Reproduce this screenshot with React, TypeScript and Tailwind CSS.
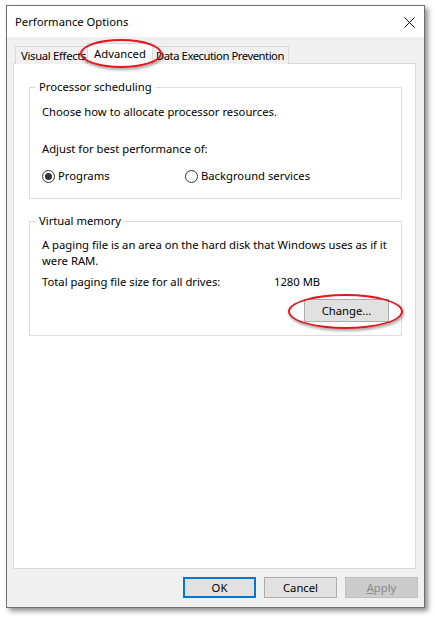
import React from "react";

const font = { fontFamily: '"Noto Sans", "Segoe UI", Arial, sans-serif' };

function Radio({ checked, label }: { checked?: boolean; label: string }) {
  return (
    <div className="flex items-center gap-[3px]">
      <span className="flex h-[13px] w-[13px] items-center justify-center rounded-full border border-[#333333] bg-white">
        {checked && <span className="h-[7px] w-[7px] rounded-full bg-[#333333]" />}
      </span>
      <span>{label}</span>
    </div>
  );
}

function Group({ title, height, children }: { title: string; height: string; children: React.ReactNode }) {
  return (
    <div className={`relative ml-[15px] w-[373px] border border-[#dcdcdc] ${height}`}>
      <span className="absolute left-[6px] top-[-9px] bg-white px-[3px] leading-[16px]">{title}</span>
      {children}
    </div>
  );
}

export default function App() {
  return (
    <div className="relative h-[618px] w-[435px] overflow-hidden bg-white text-[11.25px] text-black" style={font}>
      <div className="pl-[6px] pt-[5px]">
        <div className="flex h-[603px] w-[419px] flex-col border border-[#6f6f6f] bg-[#f0f0f0] shadow-[3px_3px_5px_rgba(0,0,0,0.45)]">
          {/* Title bar */}
          <div className="flex h-[31px] items-center justify-between bg-white pl-[8px] pr-[9px]">
            <span className="mt-[2px]">Performance Options</span>
            <svg width="11" height="11" viewBox="0 0 11 11" className="mt-[1px]">
              <path d="M0.5 0.5 L10.5 10.5 M10.5 0.5 L0.5 10.5" stroke="#111" strokeWidth="1" fill="none" />
            </svg>
          </div>
          {/* Body */}
          <div className="flex flex-1 flex-col pl-[6px] pt-[7px]">
            {/* Tabs */}
            <div className="relative z-10 flex h-[20px] items-end pl-[2px]">
              <div className="flex h-[18px] w-[74px] items-center whitespace-nowrap border border-b-0 border-[#d9d9d9] bg-[#f0f0f0] pl-[5px] leading-none tracking-[-0.3px]">
                Visual Effects
              </div>
              <div className="relative z-10 -mx-[2px] flex h-[21px] w-[66px] shrink-0 items-start justify-center border border-b-0 border-[#d9d9d9] bg-white pt-[3px] leading-[14px]">
                Advanced
              </div>
              <div className="flex h-[18px] items-center whitespace-nowrap border border-b-0 border-[#d9d9d9] bg-[#f0f0f0] pl-[4px] pr-[4px] leading-none tracking-[-0.45px]">
                Data Execution Prevention
              </div>
            </div>
            {/* Panel */}
            <div className="-mt-[1px] flex h-[506px] w-[403px] flex-col border border-[#d9d9d9] bg-white pt-[23px] leading-[16px]">
              <Group title="Processor scheduling" height="h-[112px]">
                <div className="flex flex-col pl-[12px] pt-[16px]">
                  <div>Choose how to allocate processor resources.</div>
                  <div className="mt-[21px]">Adjust for best performance of:</div>
                  <div className="mt-[11px] flex items-center">
                    <div className="w-[143px]">
                      <Radio checked label="Programs" />
                    </div>
                    <Radio label="Background services" />
                  </div>
                </div>
              </Group>
              <div className="h-[22px]" />
              <Group title="Virtual memory" height="h-[115px]">
                <div className="flex flex-col pl-[12px] pt-[15px]">
                  <div>A paging file is an area on the hard disk that Windows uses as if it</div>
                  <div>were RAM.</div>
                  <div className="mt-[5px] flex">
                    <span className="w-[232px]">Total paging file size for all drives:</span>
                    <span>1280 MB</span>
                  </div>
                  <div className="mt-[9px] flex justify-end pr-[12px]">
                    <button className="flex h-[23px] w-[85px] items-center justify-center border border-[#adadad] bg-[#e1e1e1] leading-none">
                      Change...
                    </button>
                  </div>
                </div>
              </Group>
            </div>
            {/* Bottom buttons */}
            <div className="mt-[8px] flex justify-end gap-[8px] pr-[6px]">
              <button className="flex h-[21px] w-[73px] items-center justify-center border-2 border-[#0078d7] bg-[#e1e1e1] leading-none">
                OK
              </button>
              <button className="flex h-[21px] w-[73px] items-center justify-center border border-[#adadad] bg-[#e1e1e1] leading-none">
                Cancel
              </button>
              <button className="flex h-[21px] w-[73px] items-center justify-center border border-[#bfbfbf] bg-[#cccccc] leading-none text-[#8a8a8a]">
                <span><span className="underline">A</span>pply</span>
              </button>
            </div>
          </div>
        </div>
      </div>
      {/* Annotation ellipses */}
      <div className="pointer-events-none absolute left-[80px] top-[39px] z-20 h-[29px] w-[82px] rounded-[50%] border-2 border-[#e3161b] shadow-[1px_2px_3px_rgba(0,0,0,0.35)]" />
      <div className="pointer-events-none absolute left-[288px] top-[294px] z-20 h-[35px] w-[115px] rounded-[50%] border-2 border-[#e3161b] shadow-[1px_2px_3px_rgba(0,0,0,0.35)]" />
    </div>
  );
}
